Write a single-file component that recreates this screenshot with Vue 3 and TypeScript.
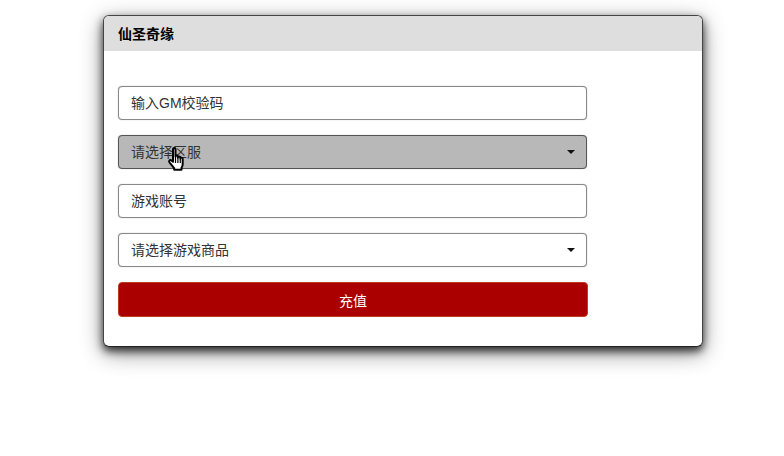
<template>
  <div class="page">
    <div class="card">
      <div class="card-head">仙圣奇缘</div>
      <form class="card-body" @submit.prevent>
        <input v-model="code" class="field" type="text" placeholder="输入GM校验码" />
        <div class="select-wrap hovered">
          <select v-model="server" class="field select">
            <option value="">请选择区服</option>
          </select>
          <span class="caret"></span>
          <!-- 录屏里的鼠标手型 -->
          <svg class="cursor" width="20" height="26" viewBox="0 0 18 26">
            <path
              d="M5 2.2c0-1.5 2.5-1.5 2.5 0v7.3c0-1.3 2.4-1.3 2.4 0v1c0-1.3 2.4-1.3 2.4 0v1c0-1.2 2.4-1.2 2.4.2v5.5c0 1.5-.5 2.6-1.2 3.7v1.8H6.2v-1.6C4.6 19.400 3.400 17.500 1.600 15.600c-1.300-1.500.3-3.300 1.900-2.100L5 14.800z"
              fill="#fff"
              stroke="#000"
              stroke-width="2"
              stroke-linejoin="round"
            />
            <path d="M7.500 10v6M9.900 11v5M12.300 12v4" stroke="#000" stroke-width="1.200" />
          </svg>
        </div>
        <input v-model="account" class="field" type="text" placeholder="游戏账号" />
        <div class="select-wrap">
          <select v-model="product" class="field select">
            <option value="">请选择游戏商品</option>
          </select>
          <span class="caret"></span>
        </div>
        <button class="submit" type="submit">充值</button>
      </form>
    </div>
  </div>
</template>

<script setup lang="ts">
import { ref } from "vue";

const code = ref<string>("");
const server = ref<string>("");
const account = ref<string>("");
const product = ref<string>("");
</script>

<style>
html,
body {
  background: #fff;
}
</style>

<style scoped>
.page {
  width: 784px;
  height: 456px;
  padding: 15px 0 0 103px;
  box-sizing: border-box;
  overflow: hidden;
  font-family: "Liberation Sans", "Noto Sans CJK SC", sans-serif;
}

.card {
  width: 600px;
  height: 332px;
  box-sizing: border-box;
  background: #fff;
  border: 1px solid #444;
  border-bottom-color: #222;
  border-radius: 6px;
  box-shadow: 0 4px 8px rgba(0, 0, 0, 0.75), 0 6px 22px rgba(0, 0, 0, 0.45);
}

.card-head {
  height: 35px;
  padding-left: 14px;
  background: #dedede;
  border-radius: 5px 5px 0 0;
  font-size: 14px;
  font-weight: 700;
  line-height: 37px;
  color: #000;
}

.card-body {
  display: flex;
  flex-direction: column;
  gap: 15px;
  width: 469px;
  margin-left: 14px;
  padding-top: 35px;
}

.field {
  display: block;
  width: 100%;
  height: 34px;
  box-sizing: border-box;
  padding: 0 12px;
  background: #fff;
  border: 1px solid #888;
  border-radius: 4px;
  box-shadow: 0 0 1px #999;
  outline: none;
  font-family: inherit;
  font-size: 14px;
  color: #333;
}

.field::placeholder {
  color: #333;
  opacity: 1;
}

.select {
  appearance: none;
}

.select-wrap {
  position: relative;
}

.hovered .field {
  background: #b8b8b8;
  border-color: #555;
}

.caret {
  position: absolute;
  top: 15px;
  right: 12px;
  width: 0;
  height: 0;
  border-top: 4px solid #111;
  border-left: 4px solid transparent;
  border-right: 4px solid transparent;
}

.cursor {
  position: absolute;
  left: 49px;
  top: 12px;
}

.submit {
  height: 35px;
  width: 470px;
  background: #a00;
  border: 1px solid #c0391b;
  border-radius: 4px;
  font-family: inherit;
  font-size: 14px;
  color: #fff;
  cursor: pointer;
}
</style>
